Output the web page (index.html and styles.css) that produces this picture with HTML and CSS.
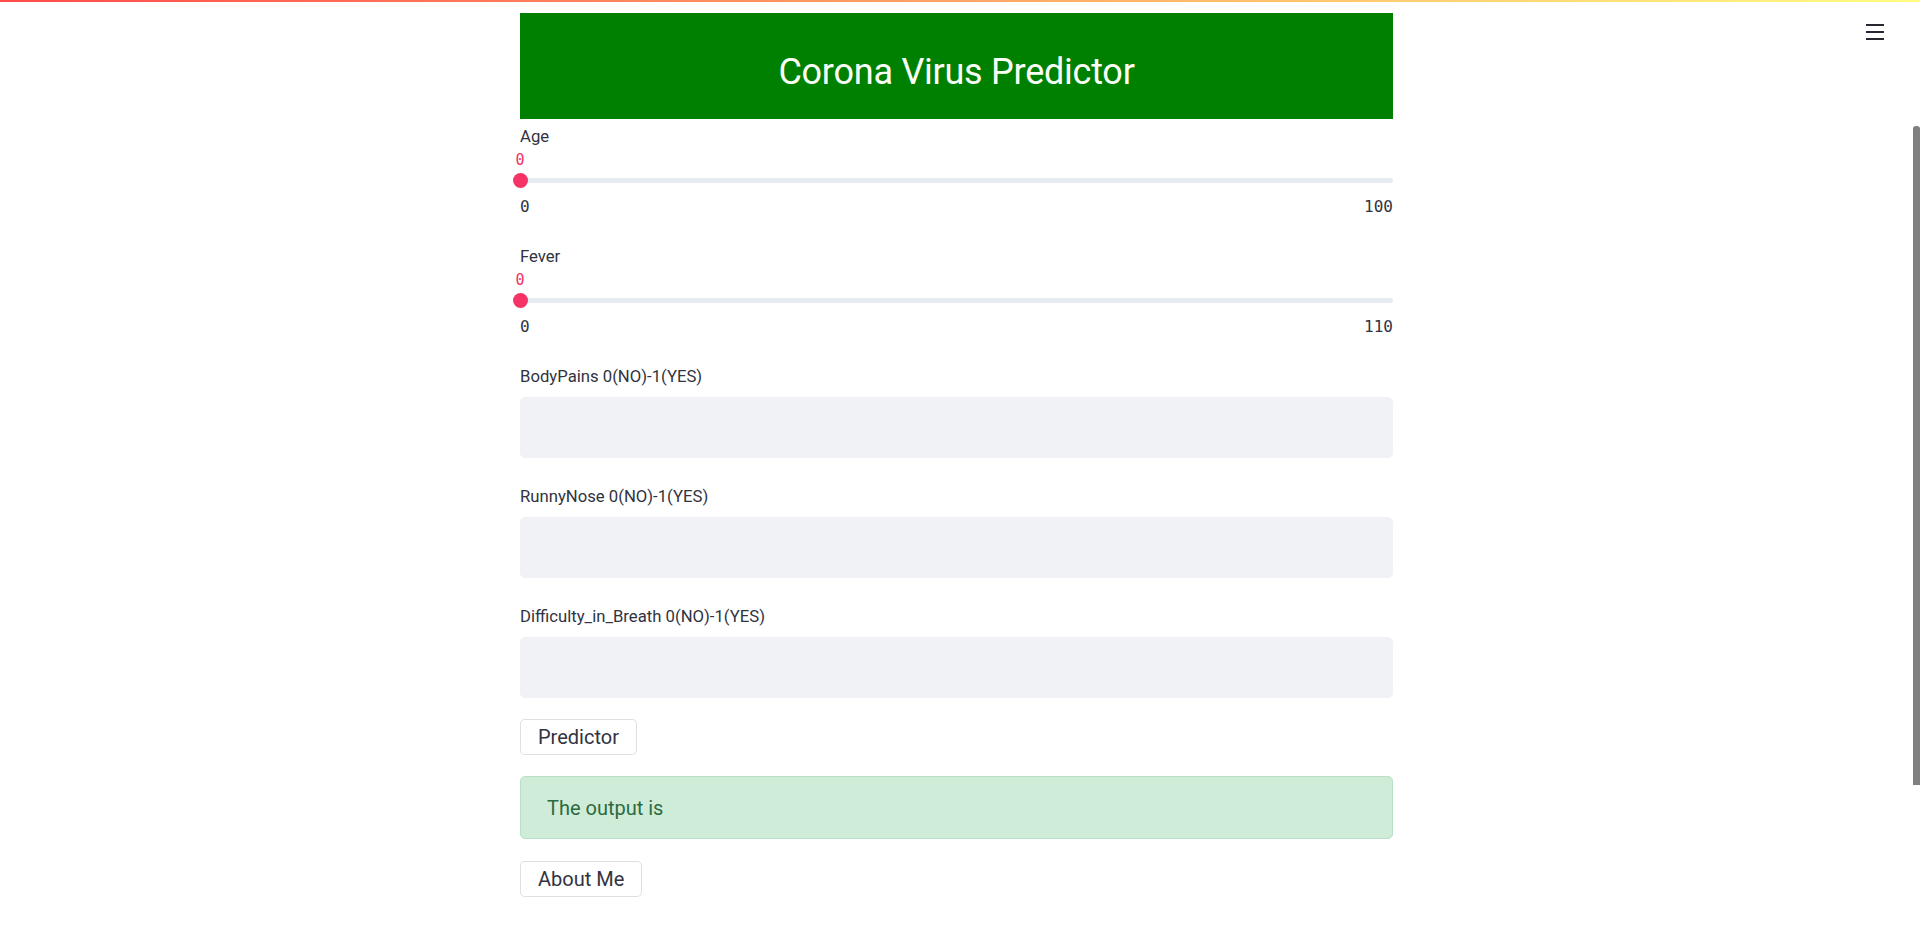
FILE: index.html
```html
<!DOCTYPE html>
<html lang="en">
<head>
<meta charset="utf-8">
<title>Corona Virus Predictor</title>
<link rel="stylesheet" href="styles.css">
</head>
<body>
<div class="decoration"></div>
<button class="menu-btn" aria-label="Main menu">
  <svg width="18" height="16" viewBox="0 0 18 16"><path d="M0 1h18M0 8h18M0 15h18" stroke="#262730" stroke-width="2"/></svg>
</button>
<div class="scroll-thumb"></div>
<div class="app">
  <main class="block">
    <div class="banner"><h2>Corona Virus Predictor</h2></div>

    <div class="slider">
      <label class="wlabel">Age</label>
      <div class="slider-value"><span>0</span></div>
      <div class="track-wrap"><div class="track"><span class="thumb"></span></div></div>
      <div class="ticks"><span>0</span><span>100</span></div>
    </div>

    <div class="slider">
      <label class="wlabel">Fever</label>
      <div class="slider-value"><span>0</span></div>
      <div class="track-wrap"><div class="track"><span class="thumb"></span></div></div>
      <div class="ticks"><span>0</span><span>110</span></div>
    </div>

    <div class="text-input">
      <label class="wlabel">BodyPains 0(NO)-1(YES)</label>
      <input class="field" type="text">
    </div>

    <div class="text-input">
      <label class="wlabel">RunnyNose 0(NO)-1(YES)</label>
      <input class="field" type="text">
    </div>

    <div class="text-input">
      <label class="wlabel">Difficulty_in_Breath 0(NO)-1(YES)</label>
      <input class="field" type="text">
    </div>

    <div class="btn-row first"><button class="btn">Predictor</button></div>

    <div class="alert">The output is</div>

    <div class="btn-row last"><button class="btn">About Me</button></div>
  </main>
</div>
</body>
</html>
```
FILE: styles.css
```css
html, body {
  margin: 0;
  padding: 0;
  background: #ffffff;
}
body {
  font-family: Roboto, "Noto Sans", Arial, sans-serif;
  color: #262730;
}
.decoration {
  position: fixed;
  top: 0;
  left: 0;
  right: 0;
  height: 2px;
  background: linear-gradient(90deg, #ff4b4b, #fffd80);
  z-index: 5;
}
.menu-btn {
  position: fixed;
  top: 24px;
  left: 1866px;
  width: 18px;
  height: 16px;
  padding: 0;
  border: none;
  background: transparent;
  display: block;
}
.menu-btn svg { display: block; }
.scroll-thumb {
  position: fixed;
  top: 126px;
  right: 0;
  width: 7px;
  height: 659px;
  background: #808080;
  border-radius: 3px 3px 0 0;
}
.app {
  display: flex;
  justify-content: center;
  padding-right: 7px;
}
.block {
  width: 873px;
  display: flex;
  flex-direction: column;
}
.banner {
  margin-top: 13px;
  height: 106px;
  background: #008000;
  display: flex;
  align-items: center;
  justify-content: center;
}
.banner h2 {
  margin: 0;
  font-size: 36px;
  font-weight: 400;
  line-height: 1.2;
  letter-spacing: -0.25px;
  color: #fbfff8;
  padding-top: 14px;
}
.wlabel {
  display: block;
  font-size: 16.7px;
  line-height: 22px;
  height: 22px;
  color: #31333f;
}
.slider {
  height: 120px;
  box-sizing: border-box;
  padding-top: 7px;
}
.slider-value {
  height: 20px;
  padding-top: 2px;
  line-height: 20px;
  font-family: "DejaVu Sans Mono", "Liberation Mono", monospace;
  font-size: 15px;
  color: #f63366;
}
.slider-value span {
  display: inline-block;
  transform: translateX(-50%);
}
.track-wrap {
  height: 21px;
  display: flex;
  align-items: center;
}
.track {
  position: relative;
  flex: 1;
  height: 5px;
  border-radius: 3px;
  background: #e6eaf1;
}
.thumb {
  position: absolute;
  left: -7.5px;
  top: -5px;
  width: 15px;
  height: 15px;
  border-radius: 50%;
  background: #f63366;
}
.ticks {
  margin-top: 6px;
  display: flex;
  justify-content: space-between;
  font-family: "DejaVu Sans Mono", "Liberation Mono", monospace;
  font-size: 16px;
  line-height: 20px;
  color: #31333f;
}
.text-input {
  height: 120px;
  box-sizing: border-box;
  padding-top: 7px;
  display: flex;
  flex-direction: column;
}
.field {
  margin-top: 9px;
  height: 61px;
  box-sizing: border-box;
  border: 1px solid #f0f2f6;
  border-radius: 5px;
  background: #f0f2f6;
  font-family: inherit;
  font-size: 20px;
  padding: 0 12px;
  outline: none;
}
.btn-row.first { margin-top: 0; }
.btn-row.last { margin-top: 22px; }
.btn {
  height: 36px;
  padding: 0 17px;
  border: 1px solid rgba(38, 39, 48, 0.15);
  border-radius: 5px;
  background: #ffffff;
  font-family: inherit;
  font-size: 20px;
  color: #31333f;
  line-height: 34px;
}
.alert {
  margin-top: 21px;
  height: 63px;
  box-sizing: border-box;
  padding: 0 26px;
  display: flex;
  align-items: center;
  background: #cfecd8;
  border: 1px solid #b9e0c6;
  border-radius: 5px;
  color: #2c6a42;
  font-size: 20px;
}
```
